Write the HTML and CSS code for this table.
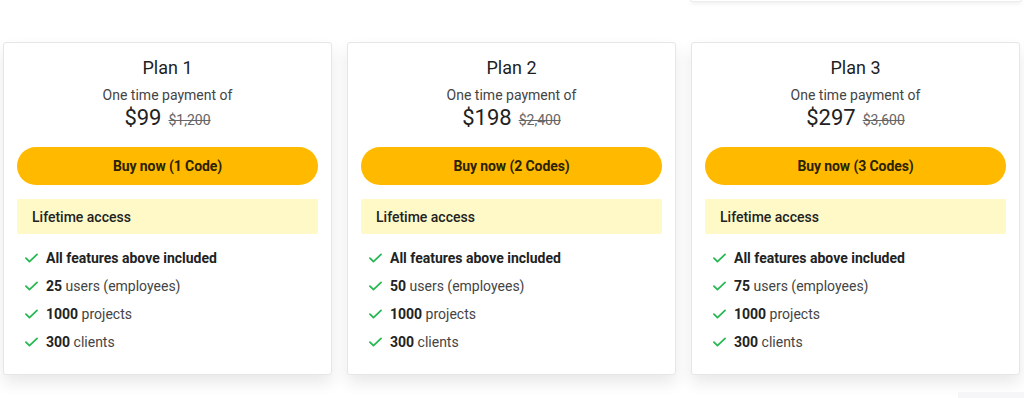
FILE: index.html
```html
<!DOCTYPE html>
<html lang="en">
<head>
<meta charset="utf-8">
<title>Plans</title>
<link rel="stylesheet" href="styles.css">
</head>
<body>
<div class="page">
  <div class="top-row"><div class="ghost-card"></div></div>
  <div class="plans">
    <div class="card">
      <h2 class="title">Plan 1</h2>
      <p class="sub">One time payment of</p>
      <p class="price"><span class="now">$99</span><span class="was">$1,200</span></p>
      <a class="buy">Buy now (1 Code)</a>
      <div class="access">Lifetime access</div>
      <ul class="features">
        <li><svg class="check" viewBox="0 0 14 10"><path d="M1 5.2 L4.8 9 L13 1"/></svg><span><b>All features above included</b></span></li>
        <li><svg class="check" viewBox="0 0 14 10"><path d="M1 5.2 L4.8 9 L13 1"/></svg><span><b>25</b> users (employees)</span></li>
        <li><svg class="check" viewBox="0 0 14 10"><path d="M1 5.2 L4.8 9 L13 1"/></svg><span><b>1000</b> projects</span></li>
        <li><svg class="check" viewBox="0 0 14 10"><path d="M1 5.2 L4.8 9 L13 1"/></svg><span><b>300</b> clients</span></li>
      </ul>
    </div>
    <div class="card">
      <h2 class="title">Plan 2</h2>
      <p class="sub">One time payment of</p>
      <p class="price"><span class="now">$198</span><span class="was">$2,400</span></p>
      <a class="buy">Buy now (2 Codes)</a>
      <div class="access">Lifetime access</div>
      <ul class="features">
        <li><svg class="check" viewBox="0 0 14 10"><path d="M1 5.2 L4.8 9 L13 1"/></svg><span><b>All features above included</b></span></li>
        <li><svg class="check" viewBox="0 0 14 10"><path d="M1 5.2 L4.8 9 L13 1"/></svg><span><b>50</b> users (employees)</span></li>
        <li><svg class="check" viewBox="0 0 14 10"><path d="M1 5.2 L4.8 9 L13 1"/></svg><span><b>1000</b> projects</span></li>
        <li><svg class="check" viewBox="0 0 14 10"><path d="M1 5.2 L4.8 9 L13 1"/></svg><span><b>300</b> clients</span></li>
      </ul>
    </div>
    <div class="card">
      <h2 class="title">Plan 3</h2>
      <p class="sub">One time payment of</p>
      <p class="price"><span class="now">$297</span><span class="was">$3,600</span></p>
      <a class="buy">Buy now (3 Codes)</a>
      <div class="access">Lifetime access</div>
      <ul class="features">
        <li><svg class="check" viewBox="0 0 14 10"><path d="M1 5.2 L4.8 9 L13 1"/></svg><span><b>All features above included</b></span></li>
        <li><svg class="check" viewBox="0 0 14 10"><path d="M1 5.2 L4.8 9 L13 1"/></svg><span><b>75</b> users (employees)</span></li>
        <li><svg class="check" viewBox="0 0 14 10"><path d="M1 5.2 L4.8 9 L13 1"/></svg><span><b>1000</b> projects</span></li>
        <li><svg class="check" viewBox="0 0 14 10"><path d="M1 5.2 L4.8 9 L13 1"/></svg><span><b>300</b> clients</span></li>
      </ul>
    </div>
  </div>
  <div class="bottom-row"><div class="ghost-bottom"></div></div>
</div>
</body>
</html>
```

FILE: styles.css
```css
* { box-sizing: border-box; }
html, body { margin: 0; padding: 0; background: #fff; }
body {
  font-family: Roboto, "Liberation Sans", Arial, sans-serif;
  color: #222;
  width: 1024px;
  height: 398px;
  overflow: hidden;
}
.page { padding: 0 4px 0 3px; }
.top-row {
  height: 40px;
  display: flex;
  justify-content: flex-end;
  margin-top: -6px;
}
.ghost-card {
  width: 332px;
  height: 8px;
  margin-right: -2px;
  background: #fff;
  border: 1px solid #ececec;
  border-radius: 3px;
  box-shadow: 0 2px 4px rgba(0,0,0,0.06);
}
.plans {
  margin-top: 8px;
  display: grid;
  grid-template-columns: repeat(3, 329px);
  column-gap: 15px;
}
.card {
  height: 333px;
  background: #fff;
  border: 1px solid #e6e6e6;
  border-radius: 3px;
  box-shadow: 0 8px 16px rgba(0,0,0,0.09);
  padding: 13px 13px 0;
  display: flex;
  flex-direction: column;
}
.title {
  margin: 0;
  font-size: 18px;
  line-height: 24px;
  font-weight: 400;
  text-align: center;
  color: #1e1e1e;
}
.sub {
  margin: 5px 0 0;
  font-size: 14px;
  line-height: 20px;
  text-align: center;
  color: #444;
}
.price {
  margin: 1px 0 0;
  display: flex;
  justify-content: center;
  align-items: baseline;
  gap: 7px;
  line-height: 24px;
}
.now { font-size: 22px; color: #222; }
.was { font-size: 14px; color: #666; text-decoration: line-through; }
.buy {
  margin-top: 15px;
  height: 38px;
  border-radius: 19px;
  background: #ffba00;
  display: flex;
  align-items: center;
  justify-content: center;
  font-size: 14px;
  font-weight: 700;
  color: #2a2200;
  letter-spacing: -0.1px;
}
.access {
  margin-top: 14px;
  height: 35px;
  background: #fff9c8;
  border-radius: 2px;
  padding: 0 15px;
  display: flex;
  align-items: center;
  font-size: 14px;
  font-weight: 500;
  color: #222;
}
.features {
  list-style: none;
  margin: 10px 0 0;
  padding: 0 0 0 8px;
}
.features li {
  height: 28px;
  display: flex;
  align-items: center;
  gap: 8px;
  font-size: 14px;
  color: #444;
}
.features b { font-weight: 700; color: #222; }
.check {
  width: 13px;
  height: 10px;
  flex: none;
  fill: none;
  stroke: #22b84f;
  stroke-width: 1.8;
  stroke-linecap: round;
  stroke-linejoin: round;
}
.bottom-row {
  display: flex;
  justify-content: flex-end;
  margin-top: 17px;
  margin-right: -4px;
}
.ghost-bottom {
  width: 66px;
  height: 10px;
  background: #f6f6f8;
}
```
